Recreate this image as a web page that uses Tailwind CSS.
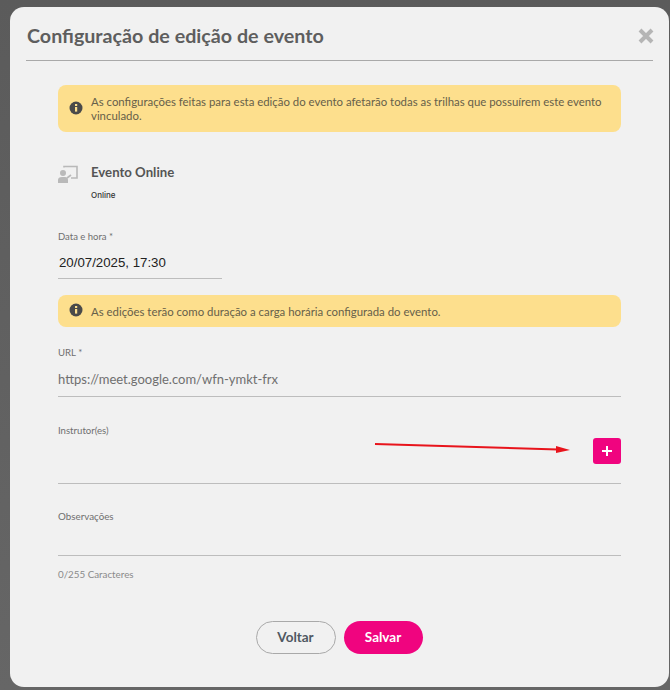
<!DOCTYPE html>
<html lang="en">
<head>
  <meta charset="UTF-8">
  <title>Configuração de edição de evento</title>
  <script src="https://cdn.jsdelivr.net/npm/@tailwindcss/browser@4"></script>
</head>
<body class="bg-linear-to-b from-[#5b5b5b] to-[#666666] font-['Lato',sans-serif] w-[670px] h-[690px] overflow-hidden">
  <!-- Modal -->
  <div class="relative ml-[10px] mt-[7px] w-[659px] h-[680px] bg-[#f1f1f1] rounded-[14px] px-[16px]">
    <!-- Header -->
    <div class="flex items-center justify-between h-[54px] border-b border-[#a9a9a9]">
      <h1 class="text-[19.7px] font-bold text-[#5e5e5e] leading-none mt-[5px] ml-[1px]">Configuração de edição de evento</h1>
      <svg class="w-[16px] h-[16px] -mr-[1px] mt-[4px]" viewBox="0 0 16 16"><path d="M2 2 L14 14 M14 2 L2 14" stroke="#b5b5b5" stroke-width="4"/></svg>
    </div>

    <div class="px-[32px]">
      <!-- Alert 1 -->
      <div class="flex items-start gap-[8px] mt-[24px] h-[47px] bg-[#fddf8d] rounded-[8px] pl-[11px] pr-[16px] pt-[10px]">
        <svg class="w-[14px] h-[14px] mt-[6px] shrink-0" viewBox="0 0 14 14"><circle cx="7" cy="7" r="6.5" fill="#4a4a4a"/><rect x="6" y="6" width="2.2" height="4.6" fill="#fddf8d"/><rect x="6" y="3" width="2.2" height="2" fill="#fddf8d"/></svg>
        <p class="text-[11.4px] leading-[14px] text-[#66604a]">As configurações feitas para esta edição do evento afetarão todas as trilhas que possuírem este evento vinculado.</p>
      </div>

      <!-- Event -->
      <div class="flex gap-[13px] mt-[31px]">
        <svg class="w-[20px] h-[18px] mt-[2px] shrink-0" viewBox="0 0 20 18" fill="none">
          <path d="M6 2.5 V1.5 H19 V13 H13" stroke="#b9b9b9" stroke-width="1.6"/>
          <circle cx="5" cy="8" r="3" fill="#b9b9b9"/>
          <path d="M0 18 V15 Q0 12 4 12 H7 Q10 12 10 15 V18 Z" fill="#b9b9b9"/>
          <path d="M9 13 L13 10" stroke="#b9b9b9" stroke-width="1.6"/>
        </svg>
        <div>
          <div class="text-[13.2px] font-bold text-[#555555] leading-[18px]">Evento Online</div>
          <div class="text-[8px] font-medium text-[#333333] font-['Inter',sans-serif] leading-[10px] mt-[9px]">Online</div>
        </div>
      </div>

      <!-- Date -->
      <div class="mt-[31px] w-[164px] border-b border-[#bdbdbd] h-[48px]">
        <label class="block text-[9.5px] text-[#6f6f6f] leading-[12px]">Data e hora *</label>
        <div class="mt-[11px] pl-[1px] text-[13.25px] text-[#222222] font-['Liberation_Sans',sans-serif] leading-[18px]">20/07/2025, 17:30</div>
      </div>

      <!-- Alert 2 -->
      <div class="flex items-center gap-[8px] mt-[16px] h-[32px] bg-[#fddf8d] rounded-[8px] pl-[11px] pr-[16px]">
        <svg class="w-[14px] h-[14px] shrink-0 -mt-[2px]" viewBox="0 0 14 14"><circle cx="7" cy="7" r="6.5" fill="#4a4a4a"/><rect x="6" y="6" width="2.2" height="4.6" fill="#fddf8d"/><rect x="6" y="3" width="2.2" height="2" fill="#fddf8d"/></svg>
        <p class="text-[11.4px] leading-[15px] text-[#66604a]">As edições terão como duração a carga horária configurada do evento.</p>
      </div>

      <!-- URL -->
      <div class="mt-[20px] border-b border-[#bdbdbd] h-[50px]">
        <label class="block text-[9.6px] text-[#6f6f6f] leading-[12px]">URL *</label>
        <div class="mt-[11px] text-[13px] text-[#6f6f6f] leading-[18px]">https://meet.google.com/wfn-ymkt-frx</div>
      </div>

      <!-- Instrutores -->
      <div class="relative mt-[28px] border-b border-[#bdbdbd] h-[59px]">
        <label class="block text-[9.6px] text-[#6f6f6f] leading-[12px]">Instrutor(es)</label>
        <button class="absolute right-0 top-[13px] w-[28px] h-[26px] bg-[#f0047f] rounded-[3px] flex items-center justify-center">
          <svg class="w-[10px] h-[10px]" viewBox="0 0 10 10"><path d="M5 0 V10 M0 5 H10" stroke="#ffffff" stroke-width="2"/></svg>
        </button>
      </div>

      <!-- Observacoes -->
      <div class="mt-[26px] border-b border-[#bdbdbd] h-[46px]">
        <label class="block text-[9.8px] text-[#6f6f6f] leading-[12px]">Observações</label>
      </div>
      <div class="mt-[12px] text-[9.8px] text-[#8a8a8a] leading-[12px]">0/255 Caracteres</div>

      <!-- Buttons -->
      <div class="flex justify-center gap-[8px] mt-[41px] pr-[1px]">
        <button class="w-[80px] h-[33px] rounded-full border border-[#a9a9a9] text-[13.5px] font-bold text-[#4f5862]">Voltar</button>
        <button class="w-[79px] h-[33px] rounded-full bg-[#f0047f] text-[13.5px] font-bold text-white">Salvar</button>
      </div>
    </div>

    <!-- Red annotation arrow -->
    <svg class="absolute left-[360px] top-[430px] w-[210px] h-[20px]" viewBox="0 0 210 20">
      <path d="M5 7 L188 12.5" stroke="#e8141c" stroke-width="2"/>
      <path d="M186 9 L200 13 L186 16 Z" fill="#e8141c"/>
    </svg>
  </div>
</body>
</html>
